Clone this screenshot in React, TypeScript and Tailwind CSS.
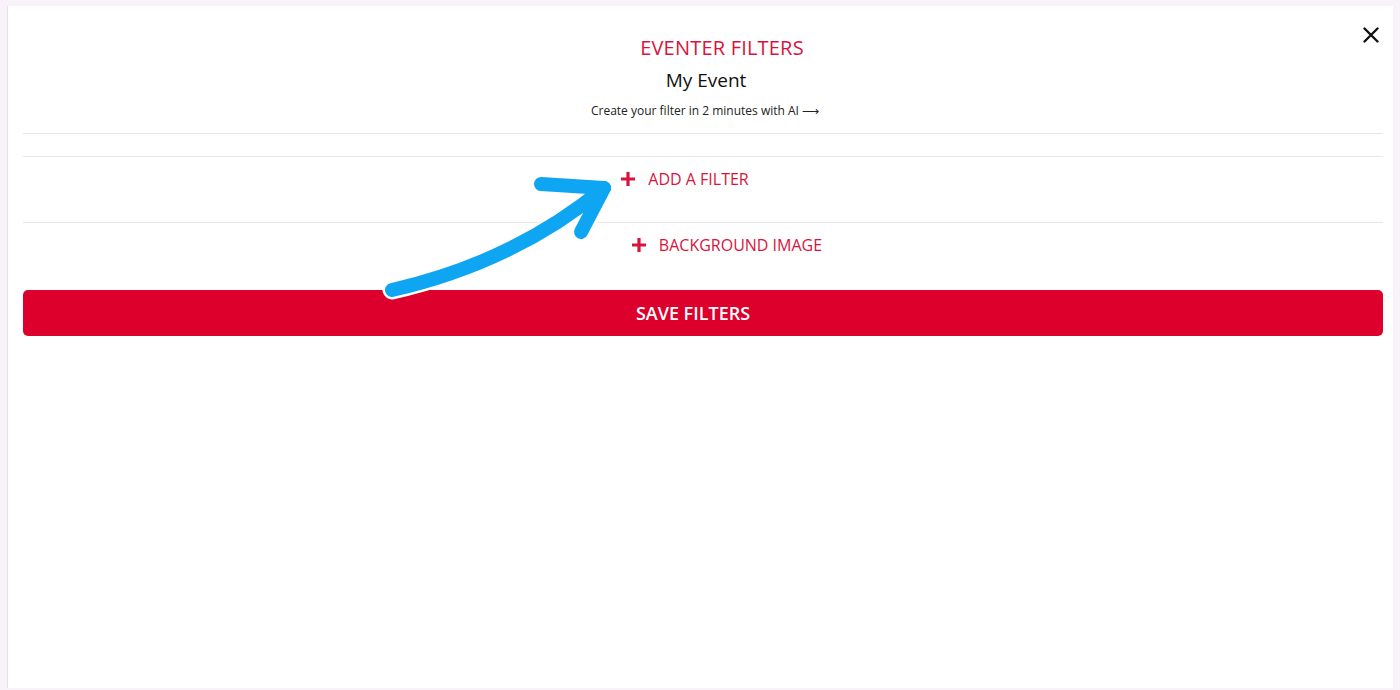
import React from "react";

function Plus() {
  return (
    <svg width="16" height="16" viewBox="0 0 16 16" className="shrink-0">
      <path d="M8 1v14M1 8h14" stroke="#d8143c" strokeWidth="3.2" strokeLinecap="butt" />
    </svg>
  );
}

export default function App() {
  return (
    <div className="w-[1400px] h-[690px] bg-[#f7f3f9] pt-[6px] pl-[7px] pr-[7px] pb-[2px] font-['Open_Sans',sans-serif] overflow-hidden">
      <div className="relative h-full bg-white border-l border-[#e4e4e4] pl-[15px] pr-[10px]">
        <button className="absolute right-[14px] top-[21px] p-0">
          <svg width="16" height="16" viewBox="0 0 16 16">
            <path d="M1.5 1.5l13 13M14.5 1.5l-13 13" stroke="#111" strokeWidth="2.4" strokeLinecap="round" />
          </svg>
        </button>

        <div className="h-[128px] flex flex-col items-center pt-[30px] border-b border-[#e8e8e8]">
          <div className="text-[20px] leading-[24px] text-[#d8143c] pl-[38px] tracking-[0.2px]">EVENTER FILTERS</div>
          <div className="text-[19px] leading-[24px] text-[#111] mt-[8px] pl-[6px]">My Event</div>
          <div className="text-[12px] leading-[16px] text-[#222] mt-[11px] pl-[4px]">Create your filter in 2 minutes with AI ⟶</div>
        </div>

        <div className="h-[23px] border-b border-[#e8e8e8]" />

        <div className="h-[66px] border-b border-[#e8e8e8] flex justify-center items-start pt-[12px] pr-[37px]">
          <div className="flex items-center gap-[12px]">
            <Plus />
            <span className="text-[16px] leading-[20px] text-[#d8143c]">ADD A FILTER</span>
          </div>
        </div>

        <div className="h-[67px] flex justify-center items-start pt-[12px] pl-[47px]">
          <div className="flex items-center gap-[12px]">
            <Plus />
            <span className="text-[16px] leading-[20px] text-[#d8143c]">BACKGROUND IMAGE</span>
          </div>
        </div>

        <button className="w-full h-[46px] rounded-[5px] bg-[#dd002c] text-white text-[18px] font-semibold flex items-center justify-center pr-[20px]">
          SAVE FILTERS
        </button>

        <svg className="absolute left-0 top-0 pointer-events-none" width="1386" height="682" viewBox="7 6 1386 682">
          <g fill="none" strokeLinecap="round" strokeLinejoin="round">
            <g stroke="#ffffff" strokeWidth="19">
              <path d="M391 290 C 470 272, 540 240, 603 188" />
              <path d="M540 184 L 603 188 L 580 232" />
            </g>
            <g stroke="#0ea6f2" strokeWidth="14">
              <path d="M391 290 C 470 272, 540 240, 603 188" />
              <path d="M540 184 L 603 188 L 580 232" />
            </g>
          </g>
        </svg>
      </div>
    </div>
  );
}
